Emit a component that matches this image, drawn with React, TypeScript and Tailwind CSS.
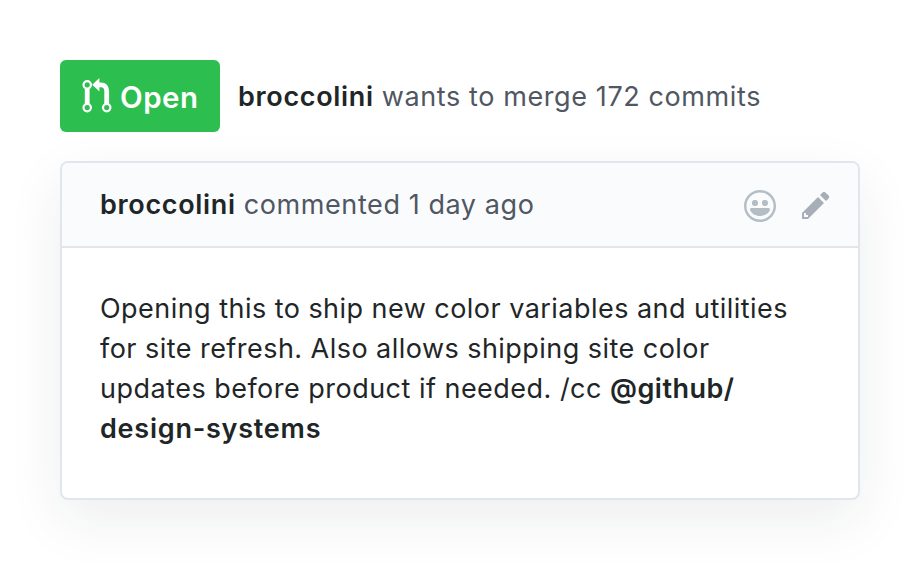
import React from "react";

function PullRequestIcon() {
  return (
    <svg width="30" height="36" viewBox="0 0 30 36" fill="none" className="shrink-0" stroke="#fff">
      <path d="M5.2 11v15M24.7 26V13c0-4-2.2-6.2-5.7-6.2h-2" strokeWidth="4.8" />
      <circle cx="5.2" cy="6.8" r="3.7" strokeWidth="2.2" fill="#2cbe4e" />
      <circle cx="5.2" cy="29.6" r="3.7" strokeWidth="2.2" fill="#2cbe4e" />
      <circle cx="24.7" cy="29.6" r="3.7" strokeWidth="2.2" fill="#2cbe4e" />
      <path d="M17.4 0v13.6L10.2 6.8z" fill="#fff" stroke="none" />
    </svg>
  );
}

function SmileyIcon() {
  return (
    <svg width="32" height="32" viewBox="0 0 16 16" fill="#b4bcc4" className="mt-[2px]">
      <path fillRule="evenodd" d="M8 0C3.58 0 0 3.58 0 8s3.58 8 8 8 8-3.58 8-8-3.58-8-8-8zm4.81 12.81a6.72 6.72 0 0 1-2.17 1.45c-.83.36-1.72.53-2.64.53-.92 0-1.81-.17-2.64-.53-.81-.34-1.55-.83-2.17-1.45a6.773 6.773 0 0 1-1.45-2.17A6.59 6.59 0 0 1 1.21 8c0-.92.17-1.81.53-2.64.34-.81.83-1.55 1.45-2.17.62-.62 1.36-1.11 2.17-1.45A6.59 6.59 0 0 1 8 1.21c.92 0 1.81.17 2.64.53.81.34 1.55.83 2.17 1.45.62.62 1.11 1.36 1.45 2.17.36.83.53 1.72.53 2.64 0 .92-.17 1.81-.53 2.64-.34.81-.83 1.55-1.45 2.17zM4 6.8v-.59c0-.66.53-1.19 1.2-1.19h.59c.66 0 1.19.53 1.19 1.19v.59c0 .67-.53 1.2-1.19 1.2H5.2C4.53 8 4 7.47 4 6.8zm5 0v-.59c0-.66.53-1.19 1.2-1.19h.59c.66 0 1.19.53 1.19 1.19v.59c0 .67-.53 1.2-1.19 1.2h-.59C9.53 8 9 7.47 9 6.8zm4 3.2c-.72 1.88-2.91 3-5 3s-4.28-1.13-5-3c-.14-.39.23-1 .66-1h8.59c.41 0 .89.61.75 1z" />
    </svg>
  );
}

function PencilIcon() {
  return (
    <svg width="28" height="32" viewBox="0 0 14 16" fill="#a8aeb8">
      <path fillRule="evenodd" d="M0 12v3h3l8-8-3-3-8 8zm3 2H1v-2h1v1h1v1zm10.3-9.3L12 6 9 3l1.3-1.3a.996.996 0 0 1 1.41 0l1.59 1.59c.39.39.39 1.02 0 1.41z" />
    </svg>
  );
}

export default function App() {
  return (
    <main className="h-[580px] w-[920px] overflow-hidden bg-white px-[60px] pt-[60px] font-['Inter',sans-serif] text-[27px] text-[#1f2628]">
      <header className="flex h-[72px] items-center">
        <div className="flex h-[72px] w-[160px] items-center rounded-[6px] bg-[#2cbe4e] pl-[22px] text-white">
          <PullRequestIcon />
          <span className="ml-[8px] pt-px text-[29.5px] font-semibold leading-[40px] tracking-[0.5px]">Open</span>
        </div>
        <p className="ml-[18px] whitespace-nowrap pt-px leading-[40px] tracking-[0.6px] text-[#505762]">
          <strong className="font-semibold tracking-[0.66px] text-[#1f2628]">broccolini</strong> wants to merge 172 commits
        </p>
      </header>
      <section className="mt-[29px] h-[339px] w-[800px] rounded-[8px] border-2 border-[#e1e6ed] bg-white shadow-[0_20px_56px_rgba(27,35,38,0.08)]">
        <div className="flex h-[85px] items-center rounded-t-[6px] border-b-2 border-[#e1e6ed] bg-[#fafbfd] pl-[38px] pr-[28px]">
          <p className="grow whitespace-nowrap leading-[40px] tracking-[0.58px] text-[#505762]">
            <strong className="font-semibold tracking-[0.66px] text-[#1f2628]">broccolini</strong> commented 1 day ago
          </p>
          <SmileyIcon />
          <span className="w-[26px]" />
          <PencilIcon />
        </div>
        <p className="whitespace-nowrap pl-[38px] pt-[41px] leading-[40px] tracking-[0.46px]">
          Opening this to ship new color variables and utilities
          <br />
          for site refresh. Also allows shipping site color
          <br />
          <span className="tracking-[0.48px]">updates before product if needed. /cc <strong className="font-semibold">@github/</strong></span>
          <br />
          <strong className="font-semibold tracking-[0.76px]">design-systems</strong>
        </p>
      </section>
    </main>
  );
}
